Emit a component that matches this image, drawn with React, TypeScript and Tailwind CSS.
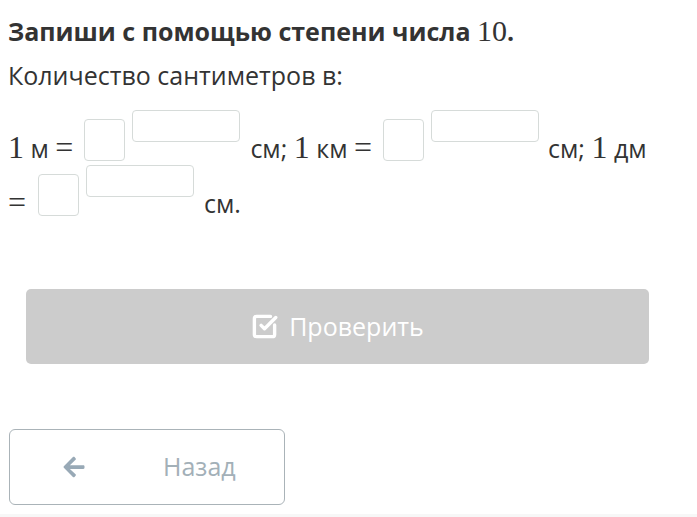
import * as React from "react";
import {SquareCheckBig} from "lucide-react";
import {FaArrowLeft} from "react-icons/fa";

const sans = "font-['Open_Sans',sans-serif]";
const serif = "font-['Liberation_Serif',serif] text-[32px]";

function Base() {
  return <span className="block h-[42px] w-[41px] rounded-[4px] border border-[#d6dbd9] bg-white" />;
}

function Exp() {
  return <span className="block h-[32px] w-[108px] rounded-[4px] border border-[#d6dbd9] bg-white" />;
}

export default function App() {
  return (
    <div className={`${sans} min-h-[517px] bg-white text-[#333] flex flex-col`}>
      <div className="px-[8px] pt-[13px]">
        <h1 className="text-[25px] font-bold leading-[36px] text-[#333]">
          Запиши с помощью степени числа <span className="font-['Liberation_Serif',serif] text-[30px] font-normal">10</span>.
        </h1>
        <p className="mt-[10px] text-[25px] leading-[32px]">Количество сантиметров в:</p>

        <div className="mt-[19px] flex items-end text-[25px]">
          <span className="leading-[24px] mb-[1px]">
            <span className={serif}>1</span> м <span className={serif}>=</span>
          </span>
          <span className="ml-[11px]"><Base /></span>
          <span className="ml-[7px] mb-[19px]"><Exp /></span>
          <span className="ml-[10px] leading-[24px] mb-[1px]">
            см; <span className={serif}>1</span> км <span className={serif}>=</span>
          </span>
          <span className="ml-[11px]"><Base /></span>
          <span className="ml-[7px] mb-[19px]"><Exp /></span>
          <span className="ml-[9px] leading-[24px] mb-[1px]">
            см; <span className={serif}>1</span> дм
          </span>
        </div>

        <div className="mt-[4px] flex items-end text-[25px]">
          <span className="leading-[24px] mb-[1px]">
            <span className={serif}>=</span>
          </span>
          <span className="ml-[12px]"><Base /></span>
          <span className="ml-[7px] mb-[19px]"><Exp /></span>
          <span className="ml-[10px] leading-[24px] mb-[1px]">см.</span>
        </div>
      </div>

      <div className="px-[26px] mt-[73px]">
        <button className="flex h-[75px] w-[623px] items-center justify-center gap-[11px] rounded-[5px] bg-[#cccccc] text-[25px] text-white">
          <SquareCheckBig size={27} strokeWidth={3} />
          <span>Проверить</span>
        </button>
      </div>

      <div className="px-[9px] mt-[65px]">
        <button className="flex h-[76px] w-[276px] items-center rounded-[6px] border border-[#aab3b8] bg-white text-[25px] text-[#a3b0b8]">
          <FaArrowLeft className="ml-[52px] text-[#98a9b6]" size={24} />
          <span className="ml-[77px]">Назад</span>
        </button>
      </div>
      <div className="mt-auto h-[3px] bg-[#f7f7f7]" />
    </div>
  );
}
